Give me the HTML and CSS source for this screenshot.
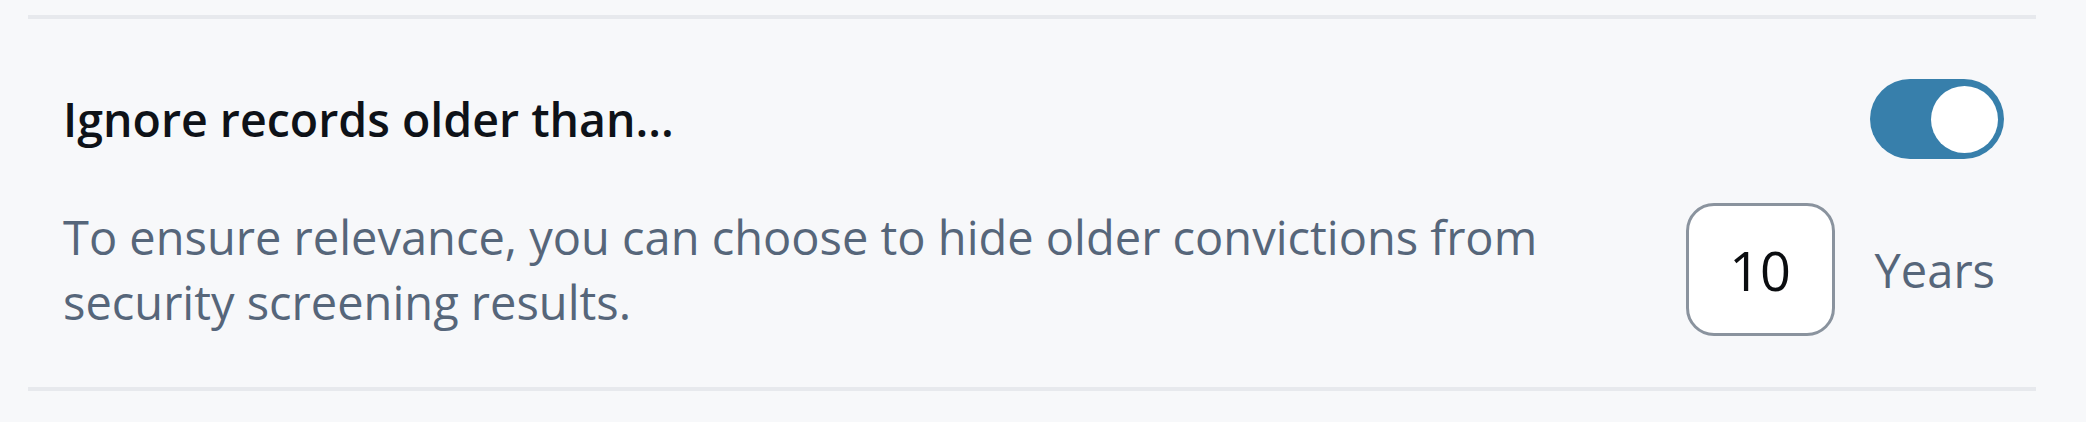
FILE: index.html
```html
<!DOCTYPE html>
<html lang="en">
<head>
<meta charset="utf-8">
<title>Ignore records older than</title>
<link rel="stylesheet" href="styles.css">
</head>
<body>
<div class="page">
  <section class="setting">
    <div class="setting-head">
      <h3 class="setting-title">Ignore records older than...</h3>
      <button class="toggle" type="button" aria-pressed="true"><span class="knob"></span></button>
    </div>
    <div class="setting-body">
      <p class="setting-desc">To ensure relevance, you can choose to hide older convictions from security screening results.</p>
      <div class="years">
        <div class="num-box">10</div>
        <span class="years-label">Years</span>
      </div>
    </div>
  </section>
</div>
</body>
</html>
```
FILE: styles.css
```css
html, body {
  margin: 0;
  padding: 0;
  background: #f7f8fa;
}
body {
  font-family: "Open Sans", "Liberation Sans", sans-serif;
  width: 2086px;
  height: 422px;
  overflow: hidden;
}
.page {
  padding: 15px 50px 0 28px;
}
.setting {
  border-top: 4px solid #e7e9ed;
  border-bottom: 4px solid #e7e9ed;
  padding: 60px 32px 51px 35px;
  display: flex;
  flex-direction: column;
  gap: 44px;
}
.setting-head {
  display: flex;
  align-items: center;
  justify-content: space-between;
  height: 80px;
}
.setting-title {
  margin: 0;
  font-size: 46.5px;
  font-weight: 600;
  color: #0e1218;
  line-height: 1;
}
.toggle {
  width: 134px;
  height: 80px;
  border: none;
  border-radius: 40px;
  background: #377fab;
  padding: 0 6px 0 0;
  display: flex;
  align-items: center;
  justify-content: flex-end;
}
.knob {
  width: 67px;
  height: 67px;
  border-radius: 50%;
  background: #ffffff;
}
.setting-body {
  display: flex;
  align-items: center;
  justify-content: space-between;
  height: 133px;
}
.setting-desc {
  margin: 0;
  width: 1560px;
  font-size: 47px;
  line-height: 65px;
  color: #56667a;
}
.years {
  display: flex;
  align-items: center;
  gap: 40px;
  padding-right: 9px;
}
.num-box {
  box-sizing: border-box;
  width: 149px;
  height: 133px;
  border: 3px solid #8a939e;
  border-radius: 28px;
  background: #ffffff;
  display: flex;
  align-items: center;
  justify-content: center;
  font-size: 54px;
  color: #0b0d10;
}
.years-label {
  font-size: 47px;
  color: #56667a;
}
```
